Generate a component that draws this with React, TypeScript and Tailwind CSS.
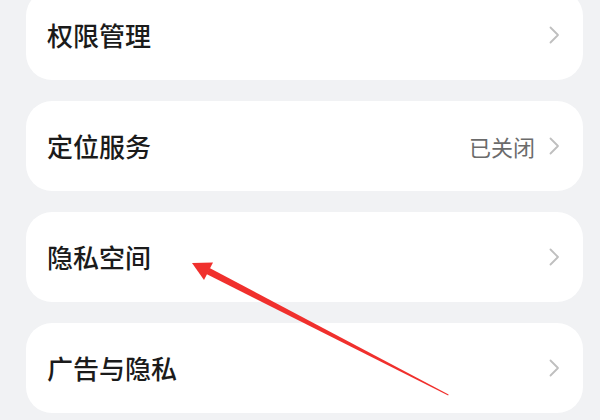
import { ReactNode } from "react";

function Chevron() {
  return (
    <svg width="11" height="18" viewBox="0 0 11 18" fill="none" className="shrink-0">
      <path d="M1.5 1.5 L9 9 L1.5 16.5" stroke="#bfbfbf" strokeWidth="1.8" strokeLinecap="round" strokeLinejoin="round" />
    </svg>
  );
}

function Row({ title, value }: { title: string; value?: ReactNode }) {
  return (
    <div className="h-[90px] bg-white rounded-[26px] flex items-center justify-between pl-[21px] pr-[23px]">
      <span className="text-[26px] font-medium text-[#1b1b1b] leading-none">{title}</span>
      <div className="flex items-center gap-[14px]">
        {value && <span className="text-[22px] text-[#6b6b6b] leading-none">{value}</span>}
        <Chevron />
      </div>
    </div>
  );
}

export default function App() {
  return (
    <div
      className="relative w-[600px] h-[420px] overflow-hidden bg-[#f1f2f4]"
      style={{ fontFamily: '"Noto Sans CJK SC", "Noto Sans", sans-serif' }}
    >
      <div className="flex flex-col gap-[21px] px-[26px] pr-[17px] -mt-[10px]">
        <Row title="权限管理" />
        <Row title="定位服务" value="已关闭" />
        <Row title="隐私空间" />
        <Row title="广告与隐私" />
      </div>

      {/* red annotation arrow */}
      <svg className="absolute inset-0 pointer-events-none" width="600" height="420" viewBox="0 0 600 420">
        <polygon points="209.6,268 206.4,274 448.2,395.6 448.6,394.6" fill="#f0302d" />
        <polygon points="192,263 213,262.5 204,280" fill="#f0302d" />
      </svg>
    </div>
  );
}
